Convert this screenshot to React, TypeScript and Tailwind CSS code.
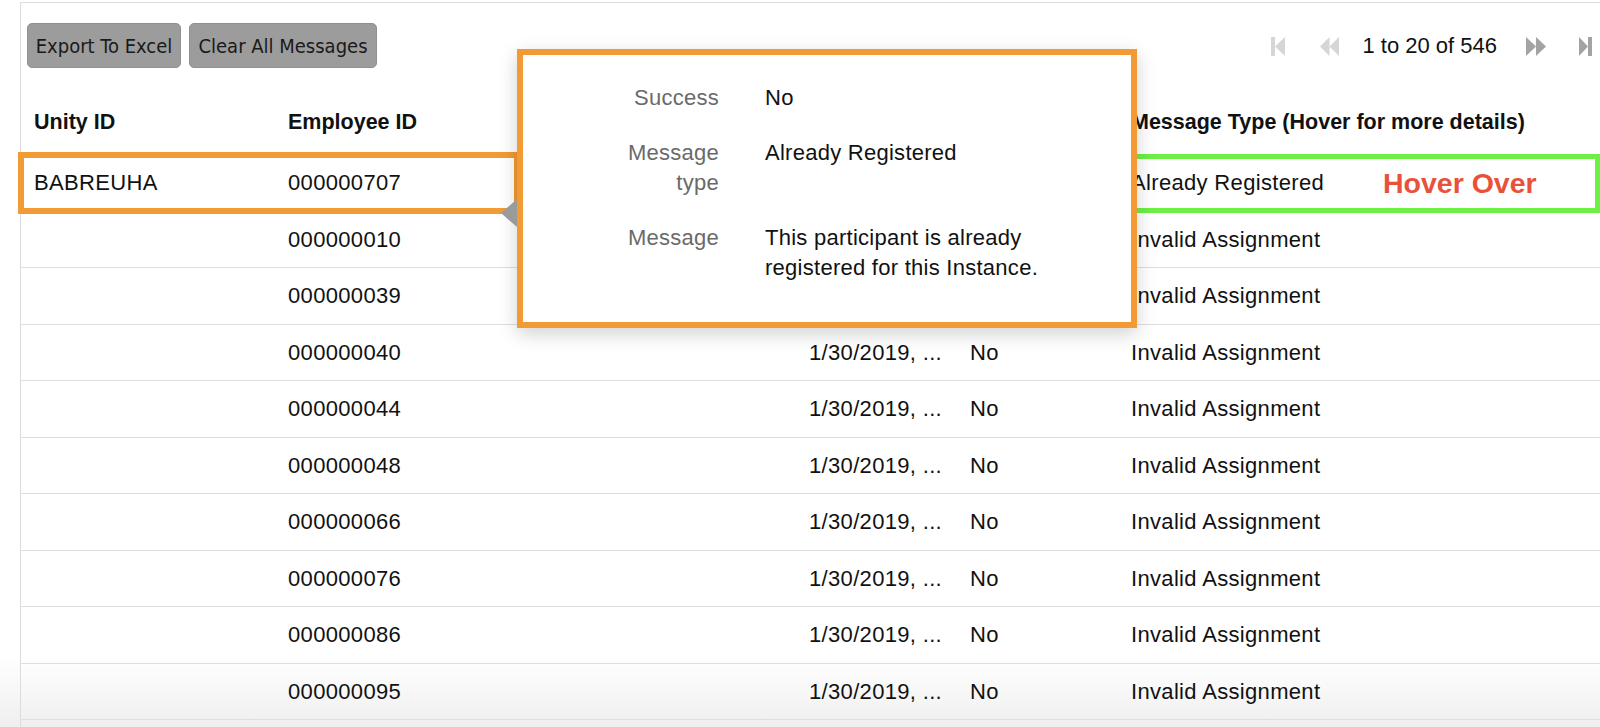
import React from 'react';

const rows = [
  { unity: 'BABREUHA', emp: '000000707', date: '1/30/2019, ...', ok: 'No', type: 'Already Registered' },
  { unity: '', emp: '000000010', date: '1/30/2019, ...', ok: 'No', type: 'Invalid Assignment' },
  { unity: '', emp: '000000039', date: '1/30/2019, ...', ok: 'No', type: 'Invalid Assignment' },
  { unity: '', emp: '000000040', date: '1/30/2019, ...', ok: 'No', type: 'Invalid Assignment' },
  { unity: '', emp: '000000044', date: '1/30/2019, ...', ok: 'No', type: 'Invalid Assignment' },
  { unity: '', emp: '000000048', date: '1/30/2019, ...', ok: 'No', type: 'Invalid Assignment' },
  { unity: '', emp: '000000066', date: '1/30/2019, ...', ok: 'No', type: 'Invalid Assignment' },
  { unity: '', emp: '000000076', date: '1/30/2019, ...', ok: 'No', type: 'Invalid Assignment' },
  { unity: '', emp: '000000086', date: '1/30/2019, ...', ok: 'No', type: 'Invalid Assignment' },
  { unity: '', emp: '000000095', date: '1/30/2019, ...', ok: 'No', type: 'Invalid Assignment' },
];

const cols = 'grid grid-cols-[254px_521px_161px_161px_1fr]';

const PagerIcon = ({ kind, color }: { kind: 'first' | 'prev' | 'next' | 'last'; color: string }) => {
  if (kind === 'first')
    return (
      <svg width="14" height="19" viewBox="0 0 14 19" fill={color}>
        <rect x="0" y="0" width="4" height="19" />
        <path d="M14 0 L4 9.5 L14 19 Z" />
      </svg>
    );
  if (kind === 'last')
    return (
      <svg width="13" height="19" viewBox="0 0 13 19" fill={color}>
        <path d="M0 0 L9 9.5 L0 19 Z" />
        <rect x="9" y="0" width="4" height="19" />
      </svg>
    );
  if (kind === 'prev')
    return (
      <svg width="19" height="19" viewBox="0 0 19 19" fill={color}>
        <path d="M9.5 0 L0 9.5 L9.5 19 Z" />
        <path d="M19 0 L9.5 9.5 L19 19 Z" />
      </svg>
    );
  return (
    <svg width="20" height="19" viewBox="0 0 20 19" fill={color}>
      <path d="M0 0 L10 9.5 L0 19 Z" />
      <path d="M10 0 L20 9.5 L10 19 Z" />
    </svg>
  );
};

export default function App() {
  return (
    <div className="relative w-[1600px] h-[727px] overflow-hidden bg-white font-['Liberation_Sans',Arial,sans-serif] text-[#111]">
      {/* bottom fade, behind the table */}
      <div className="pointer-events-none absolute bottom-0 left-0 h-[70px] w-full bg-gradient-to-b from-white to-[#efefef]" />

      <div className="relative ml-[20px] mt-[2px] h-[725px] border-l border-t border-[#dcdcdc]">
        {/* toolbar */}
        <div className="flex items-start justify-between pl-[6px] pr-[8px] pt-[20px]">
          <div className="flex gap-[8px] font-['Liberation_Sans_Narrow','DejaVu_Sans_Condensed',Arial,sans-serif] text-[20px] text-[#1a1a1a]">
            <button className="h-[45px] w-[154px] rounded-[5px] border border-[#909090] bg-[#9c9c9c]">Export To Excel</button>
            <button className="h-[45px] w-[188px] rounded-[5px] border border-[#909090] bg-[#9c9c9c]">Clear All Messages</button>
          </div>
          <div className="flex items-center pt-[12px] text-[22px]">
            <span className="flex"><PagerIcon kind="first" color="#d6d6d6" /></span>
            <span className="ml-[35px] flex"><PagerIcon kind="prev" color="#d6d6d6" /></span>
            <span className="ml-[23px] leading-none">1 to 20 of 546</span>
            <span className="ml-[29px] flex"><PagerIcon kind="next" color="#a3a3a3" /></span>
            <span className="ml-[33px] flex"><PagerIcon kind="last" color="#a3a3a3" /></span>
          </div>
        </div>

        {/* table */}
        <div className="mt-[23px] text-[22px] tracking-[0.015em]">
          <div className={`${cols} h-[64px] items-center border-b border-[#e6e6e6] text-[21.5px] font-bold tracking-normal`}>
            <div className="pl-[13px]">Unity ID</div>
            <div className="pl-[13px]">Employee ID</div>
            <div className="pl-[13px]">Date</div>
            <div className="pl-[13px]">Success</div>
            <div className="pl-[13px]">Message Type (Hover for more details)</div>
          </div>
          {rows.map((r, i) => (
            <div key={i} className={`${cols} h-[56.5px] items-center border-b border-[#dedede]`}>
              <div className="pl-[13px]">{r.unity}</div>
              <div className="pl-[13px]">{r.emp}</div>
              <div className="pl-[13px]">{r.date}</div>
              <div className="pl-[13px]">{r.ok}</div>
              <div className="pl-[13px]">{r.type}</div>
            </div>
          ))}
        </div>
      </div>

      {/* highlighted row */}
      <div className="absolute left-[18px] top-[152px] h-[62px] w-[502px] border-[6px] border-[#f29a33]" />

      {/* hover target */}
      <div className="absolute left-[1131px] top-[154px] flex h-[59px] w-[469px] items-center border-[5px] border-[#6df043] pl-[247px]">
        <span className="text-[28.5px] font-bold leading-none text-[#ea513b]">Hover Over</span>
      </div>

      {/* tooltip */}
      <div className="absolute left-[517px] top-[49px] h-[279px] w-[620px] border-[6px] border-[#f29a33] bg-white shadow-[0_6px_18px_rgba(0,0,0,0.18)]">
        <div className="absolute left-[-22px] top-[144px] h-0 w-0 border-y-[14px] border-r-[16px] border-y-transparent border-r-[#9a9a9a]" />
        <div className="grid grid-cols-[196px_1fr] gap-x-[46px] gap-y-[24px] pt-[28px] text-[22px] leading-[30.5px] tracking-[0.012em]">
          <div className="text-right text-[#6a6a6a]">Success</div>
          <div>No</div>
          <div className="flex justify-end">
            <span className="w-[100px] text-right text-[#6a6a6a]">Message type</span>
          </div>
          <div>Already Registered</div>
          <div className="text-right text-[#6a6a6a]">Message</div>
          <div className="w-[300px]">This participant is already registered for this Instance.</div>
        </div>
      </div>
    </div>
  );
}
